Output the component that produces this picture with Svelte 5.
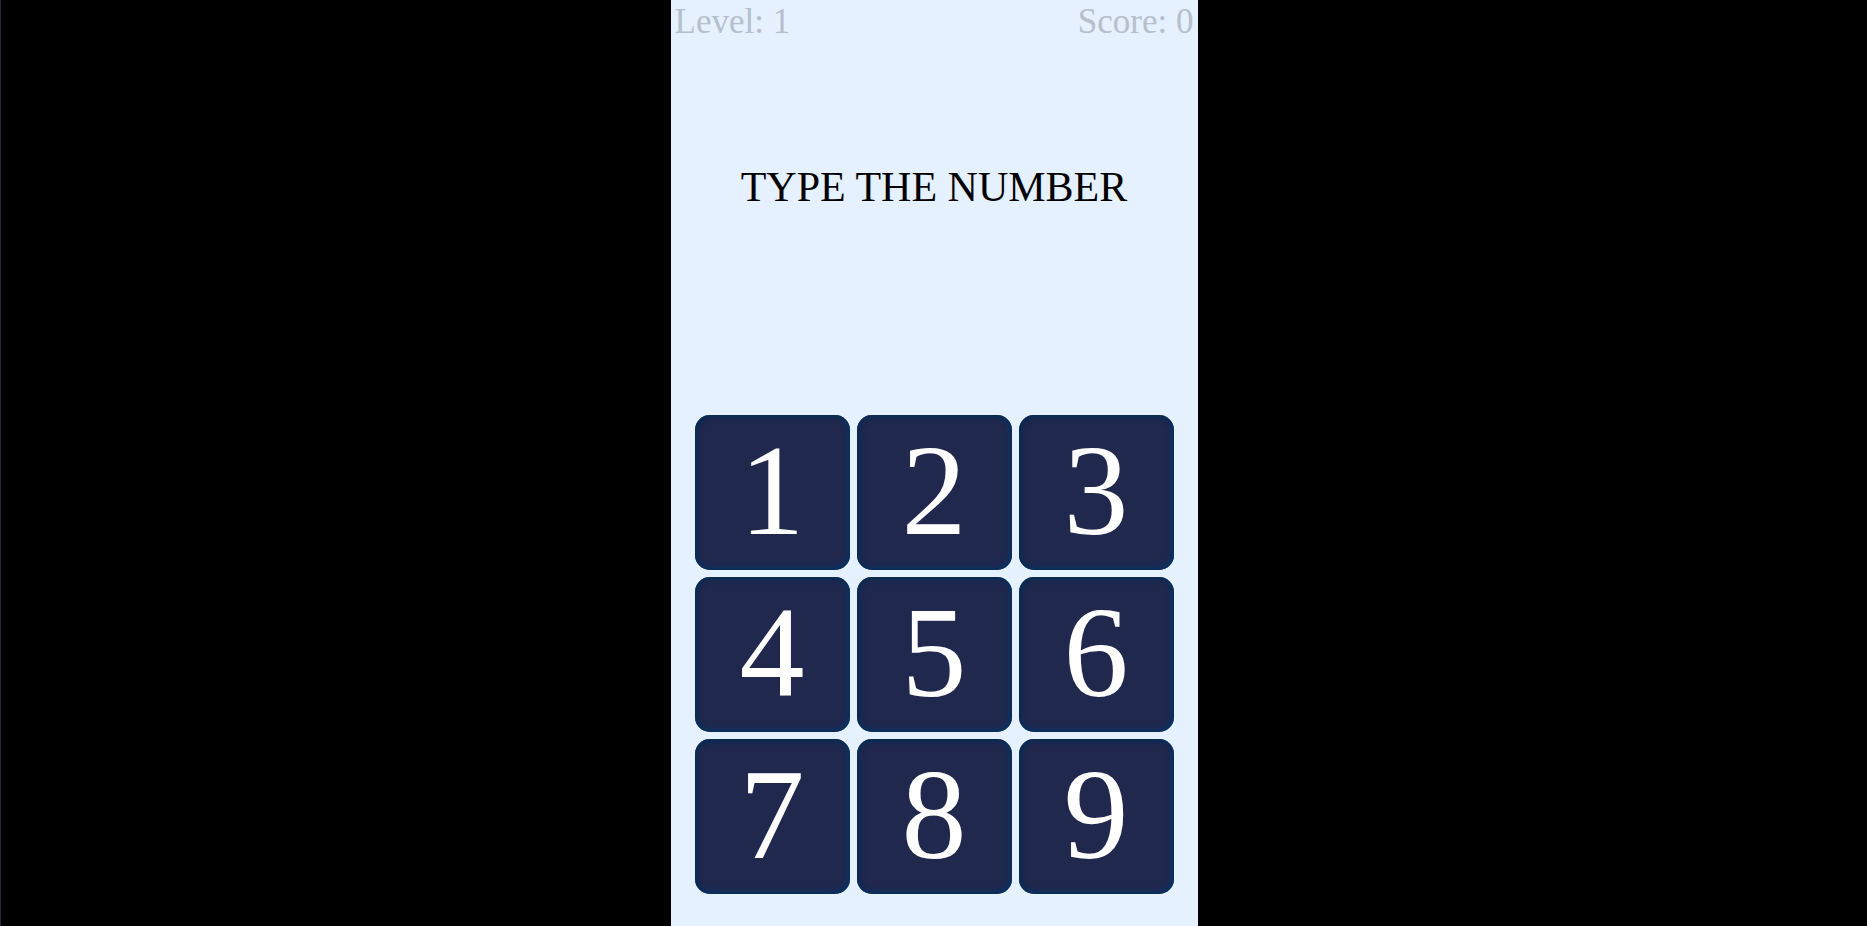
<script>
  const keys = [1, 2, 3, 4, 5, 6, 7, 8, 9];
  let level = $state(1);
  let score = $state(0);
</script>

<div class="stage">
  <main class="game">
    <header class="status">
      <span>Level: {level}</span>
      <span>Score: {score}</span>
    </header>
    <h1 class="prompt">TYPE THE NUMBER</h1>
    <div class="keypad">
      {#each keys as key}
        <button class="key" type="button">{key}</button>
      {/each}
    </div>
  </main>
</div>

<style>
  :global(body) {
    margin: 0;
    background: #000;
  }

  .stage {
    box-sizing: border-box;
    display: flex;
    justify-content: center;
    min-height: 100vh;
    border-left: 1px solid #242a3c;
    font-family: "Liberation Serif", "Times New Roman", serif;
  }

  .game {
    box-sizing: border-box;
    display: flex;
    flex-direction: column;
    min-height: 100vh;
    aspect-ratio: 527 / 926;
    background: #e5f1fe;
  }

  .status {
    display: flex;
    justify-content: space-between;
    padding: 0 4px;
    font-size: 35px;
    line-height: 43px;
    color: #b6c0cc;
  }

  .prompt {
    display: flex;
    flex: 1;
    align-items: center;
    justify-content: center;
    margin: 0 0 84px;
    font-size: 42px;
    font-weight: 400;
    line-height: 48px;
    color: #000;
  }

  .keypad {
    display: grid;
    grid-template-columns: repeat(3, 1fr);
    gap: 7px;
    padding: 0 24px 32px;
  }

  .key {
    display: flex;
    align-items: center;
    justify-content: center;
    aspect-ratio: 1;
    margin: 0;
    padding: 0 0 6px;
    border: 0;
    border-radius: 15px;
    background: #20284e;
    box-shadow:
      inset 1px 1px 6px #00284c,
      inset -1px -1px 6px #003c78;
    font-family: inherit;
    font-size: 130px;
    line-height: 1;
    color: #fff;
    cursor: pointer;
  }
</style>
